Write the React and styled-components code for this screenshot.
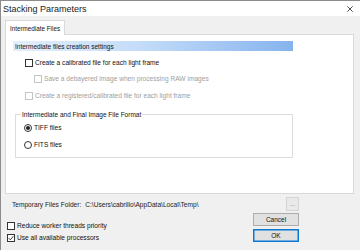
import React from "react";
import styled, { createGlobalStyle } from "styled-components";

const Global = createGlobalStyle`
  html, body { margin: 0; padding: 0; background: #ffffff; }
  body { font-family: "Liberation Sans", Arial, sans-serif; }
`;

const Window = styled.div`
  width: 360px;
  height: 250px;
  box-sizing: border-box;
  border-top: 1px solid #8c8c8c;
  border-left: 1px solid #8c8c8c;
  display: flex;
  flex-direction: column;
  background: #f0f0f0;
  overflow: hidden;
  color: #000;
`;

const TitleBar = styled.div`
  height: 15px;
  flex: none;
  background: #ffffff;
  display: flex;
  align-items: center;
  justify-content: space-between;
  padding: 0 7px 0 2px;
  font-size: 9px;
  color: #1a1a1a;
`;

const CloseIcon = styled.svg`
  width: 6px;
  height: 6px;
`;

const Body = styled.div`
  flex: 1;
  display: flex;
  flex-direction: column;
  padding: 3px 6px 0 4px;
`;

const TabStrip = styled.div`
  display: flex;
  height: 15px;
  align-items: flex-end;
`;

const Tab = styled.div`
  height: 15px;
  box-sizing: border-box;
  padding: 0 4px;
  display: flex;
  align-items: center;
  background: #ffffff;
  border: 1px solid #d9d9d9;
  border-bottom: none;
  font-size: 6.3px;
  color: #111;
  position: relative;
  z-index: 1;
  margin-bottom: -1px;
`;

const Panel = styled.div`
  height: 160px;
  box-sizing: border-box;
  background: #ffffff;
  border: 1px solid #d9d9d9;
  padding: 6px 0 0 7px;
  display: flex;
  flex-direction: column;
`;

const SectionHeader = styled.div`
  width: 280px;
  height: 10px;
  box-sizing: border-box;
  padding-left: 2px;
  display: flex;
  align-items: center;
  font-size: 6.5px;
  color: #111;
  background: linear-gradient(to right, #e4effc 0%, #c4dcf8 45%, #86b3ee 100%);
`;

const Row = styled.label`
  display: flex;
  align-items: center;
  gap: 2px;
  font-size: 6.6px;
  color: ${(p) => (p.$disabled ? "#a0a0a0" : "#111")};
  margin-left: ${(p) => p.$indent || 0}px;
  margin-top: ${(p) => p.$top || 0}px;
  height: 9px;
  white-space: nowrap;
`;

const Box = styled.span`
  width: 8px;
  height: 8px;
  box-sizing: border-box;
  border: 1px solid ${(p) => (p.$disabled ? "#c4c4c4" : "#333")};
  background: #fff;
  display: inline-flex;
  align-items: center;
  justify-content: center;
  flex: none;
`;

const Radio = styled.span`
  width: 8px;
  height: 8px;
  box-sizing: border-box;
  border: 1px solid #333;
  border-radius: 50%;
  background: #fff;
  display: inline-flex;
  align-items: center;
  justify-content: center;
  flex: none;
  &::after {
    content: "";
    width: 4px;
    height: 4px;
    border-radius: 50%;
    background: ${(p) => (p.$checked ? "#222" : "transparent")};
  }
`;

const Group = styled.fieldset`
  margin: 11px 0 0 2px;
  width: 278px;
  height: 47px;
  box-sizing: border-box;
  border: 1px solid #dcdcdc;
  padding: 4px 0 0 8px;
  display: flex;
  flex-direction: column;
`;

const Legend = styled.legend`
  font-size: 6.5px;
  padding: 0 1px;
  margin-left: -3px;
  color: #111;
`;

const FolderRow = styled.div`
  display: flex;
  align-items: center;
  height: 14px;
  margin-top: 3px;
  padding-left: 7px;
  padding-right: 55px;
  font-size: 6.6px;
  color: #222;
`;

const Path = styled.span`
  margin-left: 4px;
  flex: 1;
`;

const SmallButton = styled.div`
  width: 13px;
  height: 14px;
  box-sizing: border-box;
  border: 1px solid #d4d4d4;
  background: #e9e9e9;
  display: flex;
  align-items: flex-end;
  justify-content: center;
  font-size: 6px;
  color: #555;
  padding-bottom: 3px;
  line-height: 1;
`;

const Bottom = styled.div`
  display: flex;
  justify-content: space-between;
  padding-left: 2px;
  padding-right: 55px;
  margin-top: 2px;
`;

const Checks = styled.div`
  display: flex;
  flex-direction: column;
  gap: 3px;
  padding-top: 8px;
`;

const Buttons = styled.div`
  display: flex;
  flex-direction: column;
  gap: 3px;
`;

const Button = styled.div`
  width: 46px;
  height: 13px;
  box-sizing: border-box;
  border: 1px solid ${(p) => (p.$default ? "#0a78d7" : "#adadad")};
  box-shadow: ${(p) => (p.$default ? "inset 0 0 0 0.5px #0a78d7" : "none")};
  background: #e1e1e1;
  display: flex;
  align-items: center;
  justify-content: center;
  font-size: 6.5px;
  color: #111;
`;

const Check = () => (
  <svg width="6" height="6" viewBox="0 0 6 6">
    <path d="M0.6 3.1 L2.3 4.8 L5.4 1.2" stroke="#222" strokeWidth="0.9" fill="none" />
  </svg>
);

export default function App() {
  return (
    <>
      <Global />
      <Window>
        <TitleBar>
          <span>Stacking Parameters</span>
          <CloseIcon viewBox="0 0 6 6">
            <path d="M0.3 0.3 L5.7 5.7 M5.7 0.3 L0.3 5.7" stroke="#222" strokeWidth="0.8" />
          </CloseIcon>
        </TitleBar>
        <Body>
          <TabStrip>
            <Tab>Intermediate Files</Tab>
          </TabStrip>
          <Panel>
            <SectionHeader>Intermediate files creation settings</SectionHeader>
            <Row $indent={12} $top={7}>
              <Box />
              Create a calibrated file for each light frame
            </Row>
            <Row $indent={21} $top={7} $disabled>
              <Box $disabled />
              Save a debayered image when processing RAW images
            </Row>
            <Row $indent={12} $top={8} $disabled>
              <Box $disabled />
              Create a registered/calibrated file for each light frame
            </Row>
            <Group>
              <Legend>Intermediate and Final Image File Format</Legend>
              <Row $top={1}>
                <Radio $checked />
                TIFF files
              </Row>
              <Row $top={8}>
                <Radio />
                FITS files
              </Row>
            </Group>
          </Panel>
          <FolderRow>
            <span>Temporary Files Folder:</span>
            <Path>C:\Users\cabrillo\AppData\Local\Temp\</Path>
            <SmallButton>...</SmallButton>
          </FolderRow>
          <Bottom>
            <Checks>
              <Row>
                <Box />
                Reduce worker threads priority
              </Row>
              <Row>
                <Box>
                  <Check />
                </Box>
                Use all available processors
              </Row>
            </Checks>
            <Buttons>
              <Button>Cancel</Button>
              <Button $default>OK</Button>
            </Buttons>
          </Bottom>
        </Body>
      </Window>
    </>
  );
}
